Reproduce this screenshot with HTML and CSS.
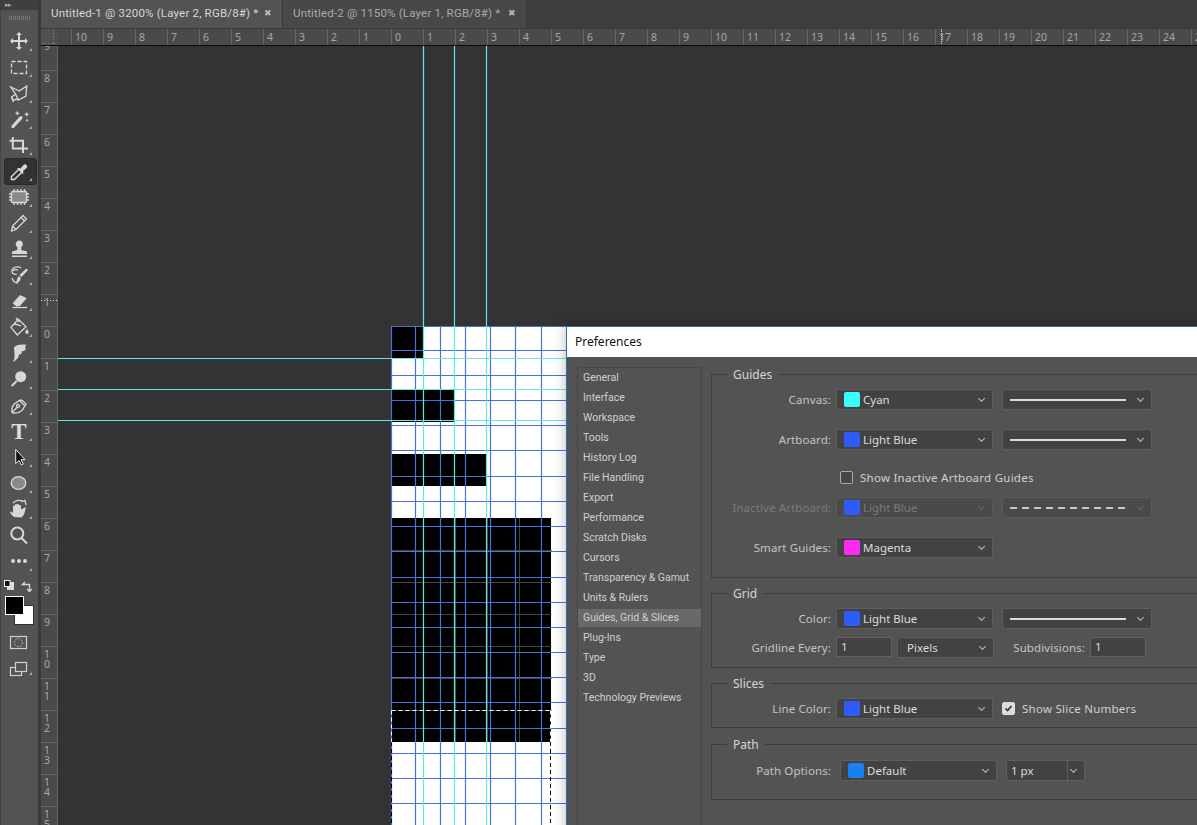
FILE: index.html
```html
<!DOCTYPE html>
<html lang="en">
<head>
<meta charset="utf-8">
<title>Preferences</title>
<link rel="stylesheet" href="styles.css">
</head>
<body>
<div class="app">
  <aside class="toolbar">
    <div class="tb-head"><span class="tb-collapse">▸▸</span></div>
    <div class="tb-grip"></div>
    <div class="tool more"><svg class="ic" viewBox="0 0 24 24"><path class="f" d="M12 3l3 3h-2v5h5V9l3 3-3 3v-2h-5v5h2l-3 3-3-3h2v-5H6v2l-3-3 3-3v2h5V6H9z"/></svg></div>
    <div class="tool more"><svg class="ic" viewBox="0 0 24 24"><rect x="4.5" y="6.5" width="15" height="12" stroke-dasharray="4 2"/></svg></div>
    <div class="tool more"><svg class="ic" viewBox="0 0 24 24"><path d="M4 6l8.3 4 7.4-5-.7 10-7.700 4-2.600-5.700z"/><path d="M8.700 13.300L4.500 16l1.500 3 5.300-1"/><path d="M4.700 16.500l1.800 4.500"/></svg></div>
    <div class="tool more"><svg class="ic" viewBox="0 0 24 24"><path class="s3" d="M6 19.500l8-8.800"/><path class="f" d="M10.300 3.500l.7 2 2 .7-2 .7-.7 2-.7-2-2-.7 2-.7zM19.700 4.500l.7 2 2 .7-2 .7-.7 2-.7-2-2-.7 2-.7zM20 11.500l.5 1.200 1.200.5-1.200.5-.5 1.200-.5-1.200-1.200-.5 1.200-.5z"/></svg></div>
    <div class="tool more"><svg class="ic" viewBox="0 0 24 24"><path class="s2" d="M2.500 7.700h13.500V20M5.800 4v11.500H18.500M18.500 15.500h2.500"/></svg></div>
    <div class="tool more selected"><svg class="ic" viewBox="0 0 24 24"><path class="s15" d="M4.500 20.500v-3l7.500-7.500 3 3-7.500 7.500z"/><path class="f" d="M11.500 9l2 .5 3-3.500a2 2 0 0 1 3 3l-3.500 3 .5 2-1 1-5.500-5.500z"/></svg></div>
    <div class="tool more"><svg class="ic" viewBox="0 0 24 24"><rect class="g" x="4.500" y="6.500" width="15" height="11" rx="1"/><path d="M2 9h2M2 12h2M2 15h2M20 9h2M20 12h2M20 15h2M7 4v2M10.500 4v2M14 4v2M17.500 4v2M7 18v2M10.500 18v2M14 18v2M17.500 18v2"/></svg></div>
    <div class="tool more"><svg class="ic" viewBox="0 0 24 24"><path d="M4.500 20l1-5L16 4.500l3.500 3.500L9 18.500zM5.500 15l3.500 3.500M14 6.500l3.500 3.500"/></svg></div>
    <div class="tool more"><svg class="ic" viewBox="0 0 24 24"><path class="f" d="M12.300 3.500a3.500 3.500 0 0 1 2 6.400v3.100l5.700 1.500v2.500H5v-2.500l5.300-1.500V9.900a3.500 3.500 0 0 1 2-6.400zM5 18.500h15V20H5z"/></svg></div>
    <div class="tool more"><svg class="ic" viewBox="0 0 24 24"><path d="M10 11c-3 1-6-1-5-4s6-4 9-2M6 8c1-1.500 4-2 5-.5M5 15c1 3 3 5 6 5"/><path class="f" d="M19.500 5.500l1.500 1.500-6.500 7-2-2zM11.800 13l2 2c-.3 3-2.300 4.800-5 5 1.200-1.500 1-5 3-7z"/></svg></div>
    <div class="tool more"><svg class="ic" viewBox="0 0 24 24"><path class="f" d="M5.700 14.300L13 6l6.700 3.300-6.700 7.700-3.500.5z"/><path d="M5.500 18.500h14.500"/></svg></div>
    <div class="tool more"><svg class="ic" viewBox="0 0 24 24"><path d="M4 12.300l7.300-8L19 11.700 10.300 20zM7 9.500c2-.8 5 .5 7 1.500M9 3l3 4"/><path class="f" d="M20 14c1 1.500 1.700 2.300 1.700 3.300a1.700 1.700 0 0 1-3.400 0c0-1 .7-1.800 1.700-3.300z"/></svg></div>
    <div class="tool more"><svg class="ic" viewBox="0 0 24 24"><path class="f" d="M7 6.500c2-2.500 7-3.500 12.500-2.500-1 .5-1.500 1.500-1.200 2.500.5 1 .3 2.500-.6 3-1 .8-2 .8-3 .7l-.2 2.300c-.2 1-1.700 1.500-2.200.3l-.8 3-1 1.700L7 20.500l-1 .5c1-2 1.800-5 1.500-8z"/></svg></div>
    <div class="tool more"><svg class="ic" viewBox="0 0 24 24"><circle class="f" cx="13.700" cy="9.700" r="5.500"/><path class="s2" d="M4.700 19l5-5"/></svg></div>
    <div class="tool more"><svg class="ic" viewBox="0 0 24 24"><path d="M5 19.500c-.8-3 .2-6 2.200-8.500l6-4 2.300.5 3.500 3.500-4 6.500c-2.500 2-6 3-8.500 2.500zM5 19.500l5-5"/><circle cx="11" cy="13" r="1.500"/><path d="M12.500 7.500l5 5"/></svg></div>
    <div class="tool more"><svg class="ic" viewBox="0 0 24 24"><text class="tool-t" x="12" y="20" text-anchor="middle">T</text></svg></div>
    <div class="tool more"><svg class="ic" viewBox="0 0 24 24"><path class="arrow" d="M8.700 4.500v14l3.300-3 2.300 4.500 2-1-2.300-4.300h4z"/></svg></div>
    <div class="tool more"><svg class="ic" viewBox="0 0 24 24"><ellipse class="g" cx="11.500" cy="12" rx="7.300" ry="6.300"/></svg></div>
    <div class="tool more"><svg class="ic" viewBox="0 0 24 24"><path class="f" d="M7 20c-2-1.500-3.500-3.500-4-5l1-.6 2 1.600V9.500a1 1 0 0 1 2 0V8a1 1 0 0 1 2 0v0a1 1 0 0 1 2 0v1a1 1 0 0 1 2 0v3.500l5-2.500-1.500 6c-.5 2-2 4-3.500 4.500z"/><path d="M6 6c2.500-3 7-3.500 10.500-1.500M19 8l-1-4.500-3.500 1.500"/></svg></div>
    <div class="tool"><svg class="ic" viewBox="0 0 24 24"><circle class="s2" cx="10.300" cy="10.500" r="6"/><path class="s2" d="M14.500 15l5.500 5.500"/></svg></div>
    <div class="tool more"><svg class="ic" viewBox="0 0 24 24"><circle class="f" cx="6" cy="12" r="2"/><circle class="f" cx="12" cy="12" r="2"/><circle class="f" cx="18" cy="12" r="2"/></svg></div>
    <svg class="colors" viewBox="0 0 38 110">
      <rect class="mini-bg" x="7" y="8" width="7" height="8"/>
      <rect class="mini-fg" x="4.500" y="6.500" width="5.500" height="6"/>
      <path class="swap" d="M25 10.500h-2.500l2.500-2.500M22.500 10.500h7V17M27 15l2.500 2.500L32 15"/>
      <rect class="bg-sw" x="14.500" y="31.500" width="19" height="19"/>
      <rect class="fg-sw" x="5.500" y="22.500" width="18" height="18"/>
      <rect class="qm" x="10.500" y="62.500" width="16" height="12"/>
      <circle class="qm-d" cx="18.500" cy="68.500" r="4"/>
      <rect class="qm" x="10.500" y="93.500" width="11" height="8"/>
      <rect class="qm-top" x="15.500" y="88.500" width="11" height="9"/>
      <path class="corner" d="M32 101h-3l3-3z"/>
    </svg>
  </aside>

  <main class="workspace">
    <nav class="tabs">
      <div class="tab active"><span>Untitled-1 @ 3200% (Layer 2, RGB/8#) *</span><span class="close">✖</span></div>
      <div class="tab"><span>Untitled-2 @ 1150% (Layer 1, RGB/8#) *</span><span class="close">✖</span></div>
    </nav>

    <div class="h-ruler">
      <div class="h-corner"></div>
      <span>10</span><span>9</span><span>8</span><span>7</span><span>6</span><span>5</span><span>4</span><span>3</span><span>2</span><span>1</span><span>0</span><span>1</span><span>2</span><span>3</span><span>4</span><span>5</span><span>6</span><span>7</span><span>8</span><span>9</span><span>10</span><span>11</span><span>12</span><span>13</span><span>14</span><span>15</span><span>16</span><span class="marked">17</span><span>18</span><span>19</span><span>20</span><span>21</span><span>22</span><span>23</span><span>24</span><span>25</span>
    </div>

    <div class="stage">
      <div class="v-ruler">
        <span>9</span><span>8</span><span>7</span><span>6</span><span>5</span><span>4</span><span>3</span><span>2</span><span class="marked">1</span><span>0</span><span>1</span><span>2</span><span>3</span><span>4</span><span>5</span><span>6</span><span>7</span><span>8</span><span>9</span><span>1<br>0</span><span>1<br>1</span><span>1<br>2</span><span>1<br>3</span><span>1<br>4</span><span>1<br>5</span>
      </div>

      <div class="canvas">
        <svg class="doc" viewBox="58 46 1139 779">
          <rect class="paper" x="391" y="326" width="200" height="499"/>
          <path class="ink" d="M391 326h32v32h-32zM391 390h64v32h-64zM391 454h96v32h-96zM391 518h160v224H391z"/>
          <path class="pixels" d="M391.500 550.500h160M391.500 582.500h160M391.500 614.500h160M391.500 646.500h160M391.500 678.500h160M391.500 710.500h160M455.500 518v224M487.500 518v224M519.500 518v224"/>
          <path class="grid" d="M391.500 326v499M415.500 326v499M440.500 326v499M465.500 326v499M490.500 326v499M515.500 326v499M541.500 326v499M391 326.500h200M391 350.500h200M391 375.500h200M391 400.500h200M391 425.500h200M391 450.500h200M391 476.500h200M391 501.500h200M391 526.500h200M391 551.500h200M391 577.500h200M391 602.500h200M391 627.500h200M391 652.500h200M391 677.500h200M391 702.500h200M391 728.500h200M391 753.500h200M391 778.500h200M391 803.500h200"/>
          <path class="guide" d="M423.500 46v779M454.500 46v779M486.500 46v779M58 358.500h533M58 389.500h533M58 420.500h533"/>
          <path class="sel-w" d="M391.500 710.500H550.500M391.500 710.500V742M550.500 710.500V742"/>
          <path class="sel-b" d="M391.500 742V825M550.500 742V825"/>
        </svg>

        <section class="dialog">
          <header class="dialog-title">Preferences</header>
          <div class="dialog-body">
            <ul class="nav">
              <li>General</li><li>Interface</li><li>Workspace</li><li>Tools</li><li>History Log</li><li>File Handling</li><li>Export</li><li>Performance</li><li>Scratch Disks</li><li>Cursors</li><li>Transparency &amp; Gamut</li><li>Units &amp; Rulers</li><li class="current">Guides, Grid &amp; Slices</li><li>Plug-Ins</li><li>Type</li><li>3D</li><li>Technology Previews</li>
            </ul>
            <div class="panels">
              <fieldset class="group guides">
                <legend>Guides</legend>
                <div class="row">
                  <label class="lbl">Canvas:</label>
                  <div class="sel color"><i class="sw cyan"></i><span>Cyan</span><b class="chev"></b></div>
                  <div class="sel style"><i class="line"></i><b class="chev"></b></div>
                </div>
                <div class="row r2">
                  <label class="lbl">Artboard:</label>
                  <div class="sel color"><i class="sw blue"></i><span>Light Blue</span><b class="chev"></b></div>
                  <div class="sel style"><i class="line"></i><b class="chev"></b></div>
                </div>
                <div class="row check-row">
                  <i class="check"></i><span>Show Inactive Artboard Guides</span>
                </div>
                <div class="row off r3">
                  <label class="lbl">Inactive Artboard:</label>
                  <div class="sel color"><i class="sw blue"></i><span>Light Blue</span><b class="chev"></b></div>
                  <div class="sel style"><i class="line dashed"></i><b class="chev"></b></div>
                </div>
                <div class="row r2">
                  <label class="lbl">Smart Guides:</label>
                  <div class="sel color"><i class="sw magenta"></i><span>Magenta</span><b class="chev"></b></div>
                </div>
              </fieldset>

              <fieldset class="group gridset">
                <legend>Grid</legend>
                <div class="row">
                  <label class="lbl">Color:</label>
                  <div class="sel color"><i class="sw blue"></i><span>Light Blue</span><b class="chev"></b></div>
                  <div class="sel style"><i class="line"></i><b class="chev"></b></div>
                </div>
                <div class="row r4">
                  <label class="lbl">Gridline Every:</label>
                  <div class="field">1</div>
                  <div class="sel unit"><span>Pixels</span><b class="chev"></b></div>
                  <label class="lbl sub">Subdivisions:</label>
                  <div class="field">1</div>
                </div>
              </fieldset>

              <fieldset class="group slices">
                <legend>Slices</legend>
                <div class="row">
                  <label class="lbl">Line Color:</label>
                  <div class="sel color"><i class="sw blue"></i><span>Light Blue</span><b class="chev"></b></div>
                  <i class="check on"><svg viewBox="0 0 13 13"><path d="M3 6.500l2.500 2.500L10 3.500"/></svg></i><span class="slice-text">Show Slice Numbers</span>
                </div>
              </fieldset>

              <fieldset class="group path">
                <legend>Path</legend>
                <div class="row">
                  <label class="lbl wide">Path Options:</label>
                  <div class="sel color"><i class="sw azure"></i><span>Default</span><b class="chev"></b></div>
                  <div class="sel combo"><span>1 px</span><em></em><b class="chev"></b></div>
                </div>
              </fieldset>
            </div>
          </div>
        </section>
      </div>
    </div>
  </main>
</div>
</body>
</html>
```

FILE: styles.css
```css
* { box-sizing: border-box; }
html, body { margin: 0; height: 100%; }
body { background: #333; font-family: "Noto Sans", "Open Sans", sans-serif; font-size: 11.5px; color: #d4d4d4; overflow: hidden; }
.app { display: flex; width: 1197px; height: 825px; overflow: hidden; background: #3a3a3a; }

/* Toolbar */
.toolbar { width: 38px; flex: none; background: #535353; border-left: 1px solid #444; display: flex; flex-direction: column; margin-right: 3px; }
.tb-head { height: 10px; margin-left: -1px; background: #3e3e3e; color: #aaa; font-size: 7px; line-height: 10px; padding-left: 5px; letter-spacing: -1px; }
.tb-grip { height: 18px; margin: 0 8px; background: repeating-linear-gradient(90deg, #777 0 1px, transparent 1px 2px) 0 6px / 100% 4px no-repeat; }
.tool { position: relative; height: 26px; margin-left: -1px; display: flex; align-items: center; justify-content: center; }
.tool.more::after { content: ""; position: absolute; left: 29px; top: 20px; border-style: solid; border-width: 0 0 3px 3px; border-color: transparent transparent #aaa transparent; }
.tool.selected::before { content: ""; position: absolute; left: 4px; top: 0; width: 31px; height: 25px; background: #333; border: 1px solid #2a2a2a; border-radius: 3px; }
.ic { position: relative; width: 24px; height: 24px; fill: none; stroke: #d8d8d8; stroke-width: 1.300; }
.ic .f { fill: #d8d8d8; stroke: none; }
.ic .g { fill: #8a8a8a; }
.ic .s15 { stroke-width: 1.500; }
.ic .s2 { stroke-width: 2; }
.ic .s3 { stroke-width: 3.200; stroke-linecap: round; }
.ic .arrow { fill: #111; stroke: #e8e8e8; stroke-width: 1; }
.tool-t { font-family: "Liberation Serif", serif; font-weight: 700; font-size: 23px; fill: #dcdcdc; stroke: none; }
.colors { width: 38px; height: 110px; margin-left: -1px; fill: none; }
.mini-bg { fill: #ddd; }
.mini-fg { fill: #111; stroke: #eee; }
.swap { stroke: #d8d8d8; stroke-width: 1.300; }
.bg-sw { fill: #fff; stroke: #333; }
.fg-sw { fill: #000; stroke: #fff; }
.qm { stroke: #d0d0d0; stroke-width: 1.200; }
.qm-top { stroke: #d0d0d0; stroke-width: 1.200; fill: #535353; }
.qm-d { stroke: #d0d0d0; stroke-dasharray: 1.500 1.500; }
.corner { fill: #aaa; }

/* Workspace */
.workspace { flex: 1; min-width: 0; display: flex; flex-direction: column; }
.tabs { height: 28px; flex: none; display: flex; background: #3e3e3e; }
.tab { width: 244px; display: flex; align-items: center; justify-content: space-between; padding: 0 10px 2px 10px; background: #484848; color: #a8a8a8; font-family: Roboto, "Noto Sans", sans-serif; font-size: 11.500px; letter-spacing: .18px; white-space: nowrap; border-right: 1px solid #3a3a3a; }
.tab.active { width: 242px; background: #535353; color: #d6d6d6; }
.close { font-size: 9px; color: #b8b8b8; }
.h-ruler { height: 18px; flex: none; display: flex; background: #4a4a4a; border-top: 1px solid #3a3a3a; border-bottom: 1px solid #0c0c0c; overflow: hidden; }
.h-corner { width: 30px; flex: none; margin-bottom: -1px; background:
  repeating-linear-gradient(#8a8a8a 0 1px, transparent 1px 3px) 12px 1px / 1px 14px no-repeat,
  repeating-linear-gradient(90deg, #8a8a8a 0 1px, transparent 1px 3px) 1px 14px / 15px 1px no-repeat,
  linear-gradient(90deg, #505050 0 16px, #4a4a4a 16px); }
.h-ruler span { flex: none; width: 32px; border-left: 1px solid #666; color: #a6a6a6; font-size: 10.500px; line-height: 17px; padding-left: 3px; white-space: nowrap; }
.h-ruler .marked { background: repeating-linear-gradient(#e4e4e4 0 1px, transparent 1px 2px) 5px 0 / 1px 100% no-repeat; }

.stage { flex: 1; min-height: 0; display: flex; }
.v-ruler { width: 17px; flex: none; background: #4a4a4a; border-right: 1px solid #666; overflow: hidden; display: flex; flex-direction: column; }
.v-ruler span { flex: none; height: 32px; border-top: 1px solid #666; color: #a6a6a6; font-size: 10.500px; line-height: 10px; padding: 2px 0 0 3px; text-align: left; }
.v-ruler span:first-child { margin-top: -8px; }
.v-ruler .marked { background: repeating-linear-gradient(90deg, #ddd 0 1px, transparent 1px 3px) 0 5px / 100% 1px no-repeat; }

.canvas { position: relative; flex: 1; min-width: 0; background: #333; overflow: hidden; }
.doc { position: absolute; left: 0; top: 0; width: 1139px; height: 779px; fill: none; }
.paper { fill: #fff; }
.ink { fill: #000; }
.pixels { stroke: #444; }
.grid { stroke: #4a72d4; stroke-width: 1.200; }
.guide { stroke: #63e6e6; stroke-width: 1.200; }
.sel-w { stroke: #fff; stroke-dasharray: 4 3; }
.sel-b { stroke: #000; stroke-dasharray: 4 3; }

/* Dialog */
.dialog { position: absolute; left: 508px; top: 280px; width: 640px; height: 520px; background: #535353; border: 1px solid #2c6db0; border-right: 0; box-shadow: 0 0 12px rgba(0, 0, 0, .28); }
.dialog-title { height: 30px; background: #fff; color: #111; font-size: 12px; line-height: 30px; padding-left: 8px; }
.dialog-body { display: flex; padding: 10px 0 0 10px; }
.nav { list-style: none; margin: 0; padding: 0 0 200px; width: 125px; flex: none; border: 1px solid #484848; color: #d0d0d0; font-family: Roboto, "Noto Sans", sans-serif; font-size: 10.500px; }
.nav li { height: 20px; line-height: 19px; padding-left: 5px; }
.nav .current { background: #696969; height: 18px; line-height: 18px; margin: 1px 0; }
.panels { margin-left: 9px; flex: none; width: 600px; }
.group { margin: 0; padding: 6px 0 0; border: 1px solid #3e3e3e; min-width: 0; }
.group legend { margin-left: 15px; padding: 2px 6px 0; font-size: 12px; line-height: 16px; color: #d4d4d4; }
.guides { height: 213px; margin-top: -2px; }
.gridset { height: 84px; margin-top: 6px; }
.slices { height: 54px; margin-top: 6px; }
.path { height: 65px; margin-top: 7px; padding-top: 7px; }

.row { display: flex; align-items: center; height: 21px; }
.r2 { margin-top: 19px; }
.r3 { margin-top: 11px; }
.r4 { margin-top: 8px; height: 20px; }
.lbl { width: 119px; flex: none; text-align: right; margin-right: 5px; color: #c4c4c4; white-space: nowrap; letter-spacing: .1px; }
.lbl.wide { margin-right: 9px; }
.sel { position: relative; height: 21px; background: #424242; border: 1px solid #5e5e5e; border-radius: 3px; display: flex; align-items: center; color: #dcdcdc; flex: none; }
.color { width: 157px; padding-left: 7px; }
.style { width: 150px; margin-left: 9px; padding-left: 7px; }
.unit { width: 97px; margin-left: 5px; padding-left: 9px; }
.combo { width: 79px; margin-left: 9px; padding-left: 4px; }
.combo em { position: absolute; right: 16px; top: 0; bottom: 0; width: 1px; background: #5e5e5e; }
.sw { width: 16px; height: 15px; border-radius: 2px; margin-right: 3px; flex: none; }
.cyan { background: #3cfdfd; }
.blue { background: #2f5cf8; }
.magenta { background: #fb2cf0; }
.azure { background: #1a7ff0; }
.line { width: 116px; height: 2px; background: #dcdcdc; flex: none; }
.line.dashed { background: repeating-linear-gradient(90deg, #c8c8c8 0 7px, transparent 7px 12px); }
.chev { position: absolute; right: 8px; top: 6px; width: 5px; height: 5px; border-right: 1px solid #bbb; border-bottom: 1px solid #bbb; transform: rotate(45deg); }
.check-row { margin-top: 19px; height: 17px; padding-left: 128px; color: #d0d0d0; letter-spacing: .25px; }
.check { width: 13px; height: 13px; flex: none; border: 1px solid #aaa; border-radius: 2px; margin-right: 7px; background: #474747; }
.check.on { margin-left: 9px; background: #ddd; border-color: #ddd; }
.check.on svg { display: block; width: 11px; height: 11px; fill: none; stroke: #333; stroke-width: 2; }
.slice-text { color: #d0d0d0; letter-spacing: .25px; }
.off .lbl { color: #7a7a7a; }
.off .sel { background: #4a4a4a; border-color: #5a5a5a; color: #7a7a7a; }
.off .chev { border-color: #666; }
.field { width: 56px; height: 20px; background: #424242; border: 1px solid #626262; flex: none; line-height: 18px; padding-left: 4px; color: #dcdcdc; }
.lbl.sub { width: 91px; margin-right: 5px; }
```
